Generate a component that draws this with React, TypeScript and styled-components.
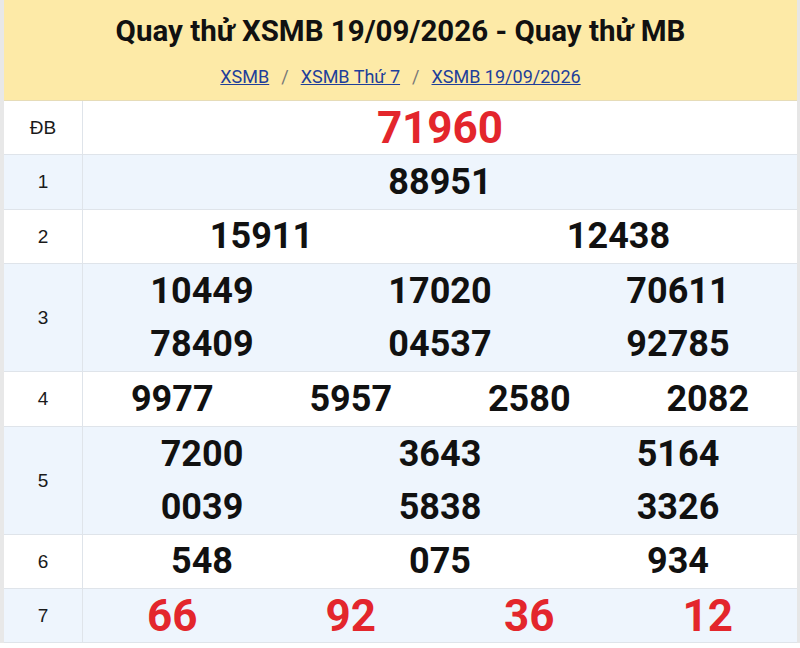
import React from "react";
import styled, { createGlobalStyle } from "styled-components";

const Global = createGlobalStyle`
  html, body { margin: 0; padding: 0; background: #ffffff; }
  body { font-family: Roboto, "Liberation Sans", Arial, sans-serif; }
`;

const Page = styled.div`
  width: 800px;
  box-sizing: border-box;
  border-left: 4px solid #e8e8e8;
  border-right: 3px solid #e6e6e6;
`;

const Header = styled.header`
  background: #fdeaa7;
  height: 101px;
  box-sizing: border-box;
  padding-top: 13px;
  text-align: center;
  border-bottom: 1px solid #e6dcb8;
`;

const Title = styled.h1`
  margin: 0;
  font-size: 29.5px;
  line-height: 36px;
  font-weight: 700;
  color: #111111;
`;

const Crumbs = styled.nav`
  margin-top: 16px;
  display: flex;
  justify-content: center;
  gap: 12px;
  font-size: 18px;
  line-height: 24px;
`;

const Crumb = styled.a`
  color: #1f3f9a;
  text-decoration: underline;
`;

const Sep = styled.span`
  color: #777777;
`;

const Row = styled.div<{ $alt?: boolean; $h: number }>`
  display: grid;
  grid-template-columns: 79px 1fr;
  height: ${(p) => p.$h}px;
  box-sizing: border-box;
  border-bottom: 1px solid #dfe4ea;
  background: ${(p) => (p.$alt ? "#eef5fd" : "#ffffff")};
`;

const Label = styled.div`
  display: flex;
  align-items: center;
  justify-content: center;
  border-right: 1px solid #dfe4ea;
  font-family: "Liberation Sans", Arial, sans-serif;
  font-size: 19px;
  color: #1a1a1a;
`;

const Cells = styled.div<{ $cols: number }>`
  display: grid;
  grid-template-columns: repeat(${(p) => p.$cols}, 1fr);
  align-content: center;
`;

const Num = styled.div<{ $red?: boolean; $big?: boolean }>`
  text-align: center;
  font-weight: 700;
  font-size: ${(p) => (p.$big ? "44px" : "36px")};
  line-height: ${(p) => (p.$big ? "52px" : "53px")};
  color: ${(p) => (p.$red ? "#e3262c" : "#111111")};
`;

type Prize = { label: string; cols: number; nums: string[]; red?: boolean; big?: boolean; h: number };

const prizes: Prize[] = [
  { label: "ĐB", cols: 1, nums: ["71960"], red: true, big: true, h: 54 },
  { label: "1", cols: 1, nums: ["88951"], h: 55 },
  { label: "2", cols: 2, nums: ["15911", "12438"], h: 54 },
  { label: "3", cols: 3, nums: ["10449", "17020", "70611", "78409", "04537", "92785"], h: 108 },
  { label: "4", cols: 4, nums: ["9977", "5957", "2580", "2082"], h: 55 },
  { label: "5", cols: 3, nums: ["7200", "3643", "5164", "0039", "5838", "3326"], h: 108 },
  { label: "6", cols: 3, nums: ["548", "075", "934"], h: 54 },
  { label: "7", cols: 4, nums: ["66", "92", "36", "12"], red: true, big: true, h: 54 },
];

export default function App() {
  return (
    <>
      <Global />
      <Page>
        <Header>
          <Title>Quay thử XSMB 19/09/2026 - Quay thử MB</Title>
          <Crumbs>
            <Crumb href="#">XSMB</Crumb>
            <Sep>/</Sep>
            <Crumb href="#">XSMB Thứ 7</Crumb>
            <Sep>/</Sep>
            <Crumb href="#">XSMB 19/09/2026</Crumb>
          </Crumbs>
        </Header>
        {prizes.map((p, i) => (
          <Row key={p.label} $alt={i % 2 === 1} $h={p.h}>
            <Label>{p.label}</Label>
            <Cells $cols={p.cols}>
              {p.nums.map((n, j) => (
                <Num key={j} $red={p.red} $big={p.big}>
                  {n}
                </Num>
              ))}
            </Cells>
          </Row>
        ))}
      </Page>
    </>
  );
}
